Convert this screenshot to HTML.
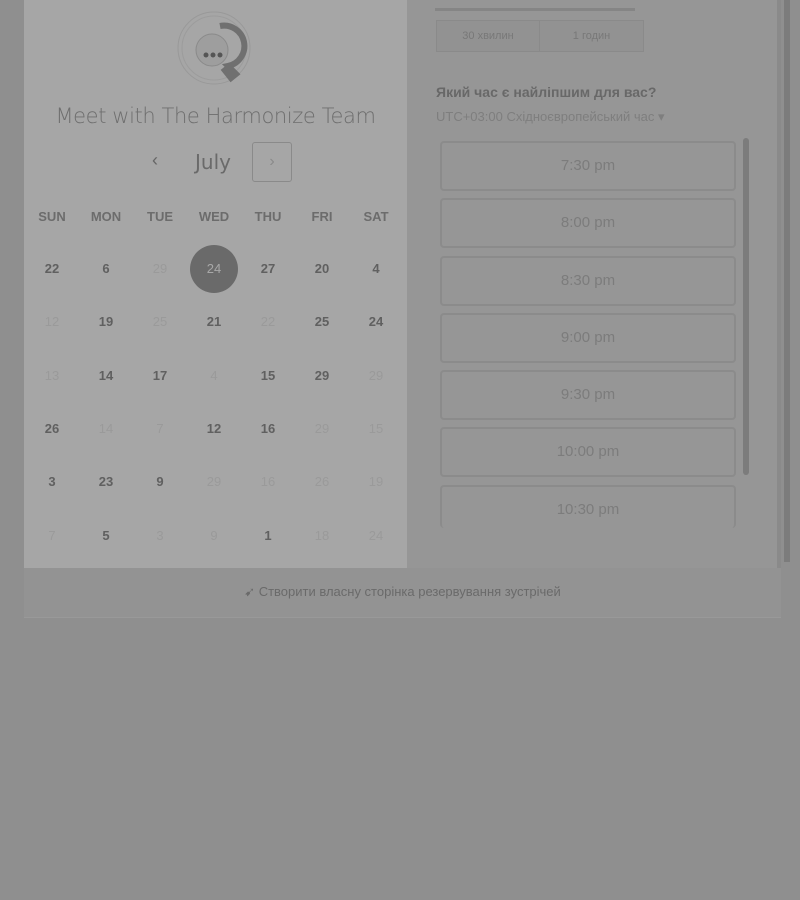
<!DOCTYPE html>
<html><head><meta charset="utf-8"><style>
*{margin:0;padding:0;box-sizing:border-box}
body{width:800px;height:900px;background:#8f8f8f;position:relative;overflow:hidden;font-family:"Liberation Sans",sans-serif}
.left{position:absolute;left:24px;top:0;width:383px;height:568px;background:#a6a6a6}
.right{position:absolute;left:407px;top:0;width:374px;height:568px;background:#969696;border-right:4px solid #8a8a8a}
.foot{position:absolute;left:24px;top:568px;width:757px;height:50px;background:#939393;border-bottom:1px solid #999;text-align:center;font-size:13px;color:#6a6a6a;line-height:48px}
.title{position:absolute;left:0;width:383px;top:104px;text-align:center;font-size:21px;color:#6e6e6e;font-family:"DejaVu Sans","Liberation Sans",sans-serif;font-weight:300;letter-spacing:-0.4px}
.month{position:absolute;left:171px;top:150px;font-size:20px;color:#6a6a6a;font-family:"DejaVu Sans",sans-serif}
.prev{position:absolute;left:128px;top:150px;font-size:18px;color:#666}
.next{position:absolute;left:228px;top:142px;width:40px;height:40px;border:1px solid #8a8a8a;border-radius:3px;text-align:center;line-height:38px;color:#8a8a8a;font-size:16px}
.c{position:absolute;width:50px;text-align:center;font-size:13px;transform:translateX(-25px)}
.h{color:#6c6c6c;font-weight:bold;font-size:13px}
.d{color:#606060;font-weight:bold}
.f{color:#9a9a9a}
.sel{position:absolute;left:190px;top:245px;width:48px;height:48px;border-radius:50%;background:#6a6a6a;color:#a8a8a8;text-align:center;line-height:48px;font-size:13px}
.slot{position:absolute;left:440px;width:296px;height:50px;border:2px solid #8b8b8b;border-radius:4px;text-align:center;line-height:46px;color:#7c7c7c;font-size:15px}
</style></head><body>
<div class="left">
 <svg style="position:absolute;left:152px;top:8px" width="80" height="80" viewBox="0 0 80 80">
  <circle cx="38" cy="40" r="36" fill="none" stroke="#999" stroke-width="1"/>
  <circle cx="38" cy="40" r="32" fill="none" stroke="#9c9c9c" stroke-width="1"/>
  <path d="M44 18 A20 20 0 0 1 52 58 L60 66 L55 70 L47 60" fill="none" stroke="#707070" stroke-width="6"/>
  <circle cx="36" cy="42" r="16" fill="#9e9e9e" stroke="#8a8a8a"/>
  <circle cx="30" cy="47" r="2.5" fill="#555"/><circle cx="37" cy="47" r="2.5" fill="#555"/><circle cx="44" cy="47" r="2.5" fill="#555"/>
 </svg>
 <div class="title">Meet with The Harmonize Team</div>
 <div class="prev">‹</div>
 <div class="month">July</div>
 <div class="next">›</div>
</div>
<div id="cal"></div>
<div class="right">
 <div style="position:absolute;left:28px;top:8px;width:200px;height:3px;background:#858585"></div>
 <div style="position:absolute;left:29px;top:20px;width:208px;height:32px;border:1px solid #8a8a8a;background:#929292;font-size:11px;color:#787878;display:flex">
  <div style="width:103px;text-align:center;line-height:30px;border-right:1px solid #8a8a8a">30 хвилин</div>
  <div style="flex:1;text-align:center;line-height:30px">1 годин</div>
 </div>
 <div style="position:absolute;left:29px;top:84px;font-size:14px;font-weight:bold;color:#686868">Який час є найліпшим для вас?</div>
 <div style="position:absolute;left:29px;top:109px;font-size:13px;color:#7e7e7e">UTC+03:00 Східноєвропейський час ▾</div>
 <div style="position:absolute;left:336px;top:138px;width:6px;height:337px;background:#7c7c7c;border-radius:3px"></div>
 <div style="position:absolute;left:377px;top:0;width:6px;height:562px;background:#7c7c7c"></div>
</div>
<div class="slot" style="top:141px">7:30 pm</div>
<div class="slot" style="top:198px">8:00 pm</div>
<div class="slot" style="top:256px">8:30 pm</div>
<div class="slot" style="top:313px">9:00 pm</div>
<div class="slot" style="top:370px">9:30 pm</div>
<div class="slot" style="top:427px">10:00 pm</div>
<div class="slot" style="top:485px;height:43px;border-bottom:none">10:30 pm</div>
<div class="foot">➹ Створити власну сторінка резервування зустрічей</div>
<script>
var xs=[52,106,160,214,268,322,376],hd=["SUN","MON","TUE","WED","THU","FRI","SAT"];
var rows=[[269,["22d","6d","29f","24s","27d","20d","4d"]],[322,["12f","19d","25f","21d","22f","25d","24d"]],[376,["13f","14d","17d","4f","15d","29d","29f"]],[429,["26d","14f","7f","12d","16d","29f","15f"]],[482,["3d","23d","9d","29f","16f","26f","19f"]],[536,["7f","5d","3f","9f","1d","18f","24f"]]];
var h="";
hd.forEach(function(t,i){h+='<div class="c h" style="left:'+xs[i]+'px;top:209px">'+t+'</div>';});
rows.forEach(function(r){r[1].forEach(function(v,i){var k=v.slice(-1),n=v.slice(0,-1);if(k=="s")h+='<div class="sel">'+n+'</div>';else h+='<div class="c '+k+'" style="left:'+xs[i]+'px;top:'+(r[0]-8)+'px">'+n+'</div>';});});
document.getElementById("cal").innerHTML=h;
</script>
</body></html>
